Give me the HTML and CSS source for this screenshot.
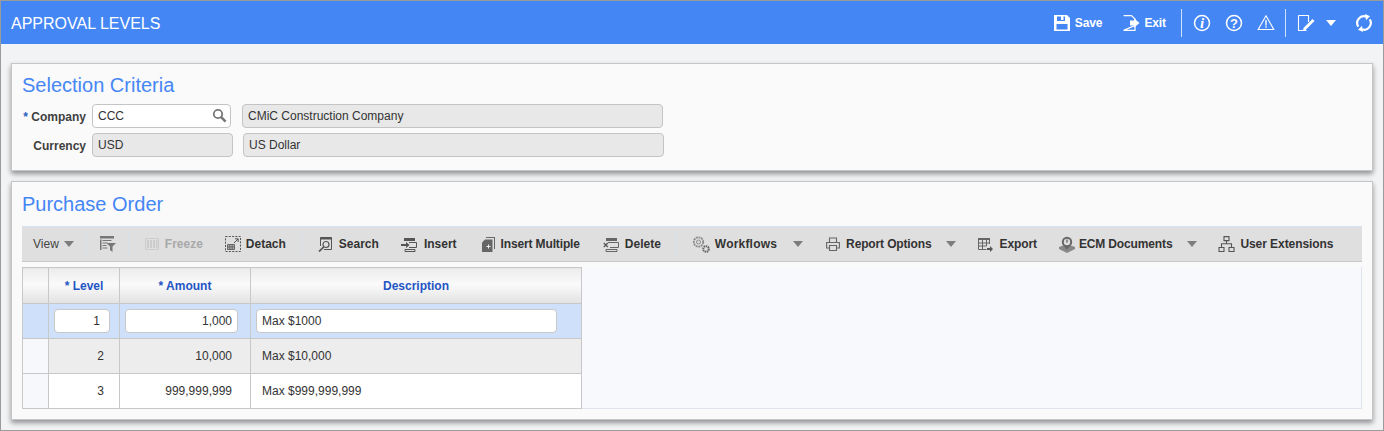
FILE: index.html
```html
<!DOCTYPE html>
<html lang="en">
<head>
<meta charset="utf-8">
<title>Approval Levels</title>
<link rel="stylesheet" href="styles.css">
</head>
<body>
<div class="frame">
  <header class="topbar">
    <div class="app-title">APPROVAL LEVELS</div>
    <div class="top-actions">
      <span class="top-btn save-btn">
        <svg class="ti" width="18" height="18" viewBox="0 0 18 18"><path fill="#fff" fill-rule="evenodd" d="M1 1h13l3 3v13H1zM4 2.500V7h8V2.500h-1.500V6H8V2.500zM3.500 10v5.500h11V10z"/></svg>
        Save</span>
      <span class="top-btn exit-btn">
        <svg class="ti" width="18" height="18" viewBox="0 0 18 18"><path fill="none" stroke="#fff" stroke-width="1.200" d="M1.600 1.600H9.500L13 5v1.500M13 11.500V16.400H1.600z"/><path fill="#fff" d="M8 6.500h4V4.300L17.500 9 12 13.700V11.500H8z"/></svg>
        Exit</span>
      <span class="top-sep sep-a"></span>
      <svg class="ti info-i" width="18" height="18" viewBox="0 0 18 18"><circle cx="9" cy="9" r="7.500" fill="none" stroke="#fff" stroke-width="1.500"/><text x="9" y="14" text-anchor="middle" class="glyph-i">i</text></svg>
      <svg class="ti help-i" width="18" height="18" viewBox="0 0 18 18"><circle cx="9" cy="9" r="7.500" fill="none" stroke="#fff" stroke-width="1.500"/><text x="9" y="13.500" text-anchor="middle" class="glyph-q">?</text></svg>
      <svg class="ti warn-i" width="18" height="18" viewBox="0 0 18 18"><path fill="none" stroke="#fff" stroke-width="1.100" d="M9 1.800 16.800 15.500H1.200z"/><path fill="#fff" d="M8.300 6h1.400v5.500H8.300zM8.300 12.300h1.400v1.500H8.300z"/></svg>
      <span class="top-sep sep-b"></span>
      <svg class="ti note-i" width="18" height="18" viewBox="0 0 18 18"><path fill="none" stroke="#fff" stroke-width="1.100" d="M1.500 1.500H11.500V8M9.500 16.500H1.500V1.500"/><path fill="#fff" d="M6.500 14 15.500 5l2 2-9 9-2.500.5z"/></svg>
      <span class="caret-white"></span>
      <svg class="ti refresh-i" width="18" height="18" viewBox="0 0 18 18"><path fill="none" stroke="#fff" stroke-width="2.200" d="M3.300 12.600A6.700 6.700 0 0 1 11 2.600M14.700 5.400A6.700 6.700 0 0 1 7 15.400"/><path fill="#fff" d="M10 0 15 2.300 11 6.200zM8 18 3 15.700 7 11.800z"/></svg>
    </div>
  </header>

  <main class="content">
    <section class="panel panel-criteria">
      <h2 class="panel-title">Selection Criteria</h2>
      <div class="form-row row-company">
        <label class="lbl"><span class="req">*</span> Company</label>
        <div class="field field-lov">CCC
          <svg class="lov-icon" width="15" height="15" viewBox="0 0 15 15"><circle cx="6" cy="6" r="4.200" fill="none" stroke="#777" stroke-width="1.800"/><path stroke="#777" stroke-width="2.600" d="M9.200 9.200 13.600 13.600"/></svg>
        </div>
        <div class="field ro field-long">CMiC Construction Company</div>
      </div>
      <div class="form-row row-currency">
        <label class="lbl">Currency</label>
        <div class="field ro field-short">USD</div>
        <div class="field ro field-long second">US Dollar</div>
      </div>
    </section>

    <section class="panel panel-po">
      <h2 class="panel-title">Purchase Order</h2>
      <div class="toolbar">
        <span class="tb view">View</span><span class="caret c-view"></span>
        <span class="tsep s1"></span>
        <svg class="ic i-filter" width="17" height="16" viewBox="0 0 17 16"><path fill="#777" d="M1 0h14v2.500H1zM1 3.500h1.500V14H1zM3.500 4h9v1h-9zM3.500 6.500h5v1h-5zM3.500 9h4v1h-4zM3.500 11.500h5v1h-5zM7.500 7h9.500L13.500 10.500V16L11 14v-3.500z"/></svg>
        <span class="tsep s2"></span>
        <svg class="ic i-freeze" width="14" height="14" viewBox="0 0 14 14"><path fill="none" stroke="#ccc" d="M.5 1.500h13v11H.5z"/><path fill="#ccc" d="M2 3h2v8H2zM5 3h2v8H5zM8 3h2v8H8zM11 3h1.500v8H11z"/></svg>
        <span class="tb off t-freeze">Freeze</span>
        <svg class="ic i-detach" width="16" height="16" viewBox="0 0 16 16"><path fill="none" stroke="#555" stroke-dasharray="2 1.300" d="M.5.500h15v15H.5z"/><path fill="none" stroke="#666" d="M2.500 8.500h7v5h-7zM2.500 10.200h7M2.500 11.900h7M4.800 8.500v5M7.200 8.500v5"/><path fill="none" stroke="#555" d="M9 7l4-4M10 2.800h3.200V6"/></svg>
        <span class="tb t-detach">Detach</span>
        <span class="tsep s3"></span>
        <svg class="ic i-search" width="15" height="16" viewBox="0 0 15 16"><path fill="none" stroke="#555" d="M2.500 10V1.500h11v12H6"/><path fill="#555" d="M2.500 1.500h11v2h-11z"/><circle cx="8" cy="8.500" r="3" fill="none" stroke="#555" stroke-width="1.200"/><path stroke="#555" stroke-width="1.700" d="M5.800 10.800 1 15.500"/></svg>
        <span class="tb t-search">Search</span>
        <svg class="ic i-insert" width="16" height="15" viewBox="0 0 16 15"><path fill="#555" d="M3 1h11v3H3zM0 7h5V5l3.500 3L5 11V9H0z"/><path fill="none" stroke="#555" d="M8 5.500h7.500v5H8M4 12.500h10v2H4z"/></svg>
        <span class="tb t-insert">Insert</span>
        <svg class="ic i-multi" width="13" height="15" viewBox="0 0 13 15"><path fill="#666" d="M4 0h9v12h-1V1H4z"/><path fill="#666" d="M3 2.500h7.500V15H0V5.500z"/><path fill="#eee" d="M4.500 9h1.500V7.500h1V9h1.500v1H7v1.500H6V10H4.500z"/></svg>
        <span class="tb t-multi">Insert Multiple</span>
        <svg class="ic i-delete" width="16" height="15" viewBox="0 0 16 15"><path fill="#666" d="M3 1h11v3H3z"/><path fill="none" stroke="#666" d="M5 5.500h10.500v5H7M3 12.500h11v2H3z"/><path stroke="#555" stroke-width="1.200" d="M.8 6l4 4M4.800 6l-4 4"/></svg>
        <span class="tb t-delete">Delete</span>
        <span class="tsep s4"></span>
        <svg class="ic i-gears" width="18" height="17" viewBox="0 0 18 17"><circle cx="6.500" cy="6" r="4.700" fill="none" stroke="#8a8a8a" stroke-width="1.800" stroke-dasharray="2 .7"/><circle cx="6.500" cy="6" r="2" fill="none" stroke="#8a8a8a"/><circle cx="14" cy="13" r="2.800" fill="none" stroke="#666" stroke-width="2" stroke-dasharray="1.500 .6"/></svg>
        <span class="tb t-work">Workflows</span><span class="caret c-work"></span>
        <svg class="ic i-print" width="14" height="14" viewBox="0 0 14 14"><path fill="none" stroke="#666" stroke-width="1.100" d="M3.500 5V1h7v4M3 11H.6V5.500h12.800V11H11M3.500 8.500h7v5h-7z"/></svg>
        <span class="tb t-report">Report Options</span><span class="caret c-report"></span>
        <svg class="ic i-export" width="15" height="15" viewBox="0 0 15 15"><path fill="#666" d="M0 1h12v2H0z"/><path fill="none" stroke="#666" d="M.5 3v9.500h8M4.500 3v9.500M8.500 3v6M.5 6h11M.5 9h8M11.500 3v4"/><path fill="#555" d="M9 11h3V9l3 3-3 3v-2H9z"/></svg>
        <span class="tb t-export">Export</span>
        <svg class="ic i-ecm" width="16" height="17" viewBox="0 0 16 17"><path fill="#888" d="M0 11l4-1.500 4 2 4-2 4 1.500v2l-8 4-8-4z"/><circle cx="8" cy="6" r="5.200" fill="#666"/><circle cx="8" cy="6" r="3.200" fill="#ddd"/><path fill="#666" d="M7.300 3.500h1.400v3h-1.400z"/><path fill="#666" d="M5 10h6l-3 3.500z"/></svg>
        <span class="tb t-ecm">ECM Documents</span><span class="caret c-ecm"></span>
        <svg class="ic i-ue" width="17" height="16" viewBox="0 0 17 16"><path fill="none" stroke="#555" stroke-width="1.100" d="M6 .6h5v4H6zM1 11.500h5v4H1zM11 11.500h5v4h-5zM8.500 4.600v3.200M3.500 11.500V7.800h10v3.700"/></svg>
        <span class="tb t-ue">User Extensions</span>
      </div>

      <div class="grid-area">
        <table class="grid">
          <colgroup>
            <col class="col-sel"><col class="col-level"><col class="col-amount"><col class="col-desc">
          </colgroup>
          <thead>
            <tr><th></th><th>* Level</th><th>* Amount</th><th>Description</th></tr>
          </thead>
          <tbody>
            <tr class="row-active">
              <td class="sel"></td>
              <td><div class="cell-input num in-level">1</div></td>
              <td><div class="cell-input num in-amount">1,000</div></td>
              <td><div class="cell-input in-desc">Max $1000</div></td>
            </tr>
            <tr class="row-alt">
              <td class="sel"></td><td class="num">2</td><td class="num">10,000</td><td class="txt">Max $10,000</td>
            </tr>
            <tr class="row-plain">
              <td class="sel"></td><td class="num">3</td><td class="num">999,999,999</td><td class="txt">Max $999,999,999</td>
            </tr>
          </tbody>
        </table>
      </div>
    </section>
  </main>
</div>
</body>
</html>
```
FILE: styles.css
```css
* { box-sizing: border-box; }
html, body { margin: 0; padding: 0; }
body {
  width: 1384px;
  height: 431px;
  overflow: hidden;
  font-family: "Liberation Sans", Arial, sans-serif;
  font-size: 12px;
  color: #333;
}
.frame {
  width: 1384px;
  height: 431px;
  border: 1px solid #9b9b9b;
  background: #f2f3f5;
}
.topbar {
  height: 43px;
  background: #4586f5;
  display: flex;
  align-items: center;
  justify-content: space-between;
  padding: 0 10px 0 10px;
}
.app-title {
  color: #fff;
  font-size: 16px;
  padding-top: 2px;
}
.top-actions { display: flex; align-items: center; height: 100%; }
.top-btn { display: flex; align-items: center; color: #fff; font-weight: bold; font-size: 12px; letter-spacing: -.1px; }
.ti { display: block; flex: none; }
.save-btn .ti { margin-right: 4px; }
.exit-btn { margin-left: 20px; }
.exit-btn .ti { margin-right: 4px; }
.top-sep { width: 1px; height: 28px; background: #cfe0fb; }
.sep-a { margin-left: 15px; margin-right: 11px; }
.info-i { margin-right: 14px; }
.help-i { margin-right: 14px; }
.warn-i { margin-right: 10px; }
.sep-b { margin-right: 11px; }
.note-i { margin-right: 11px; }
.caret-white {
  width: 0; height: 0;
  border-left: 5px solid transparent;
  border-right: 5px solid transparent;
  border-top: 6px solid #fff;
  margin-right: 19px;
}
.glyph-i { fill: #fff; font: italic bold 15px "Liberation Serif", serif; }
.glyph-q { fill: #fff; font: bold 13px "Liberation Sans", sans-serif; }

.content { padding: 19px 10px 0 10px; }
.panel {
  width: 1362px;
  background: #fafafa;
  border: 1px solid #c6c6c6;
  box-shadow: 0 3px 5px rgba(0,0,0,.4);
  padding: 0 10px;
}
.panel-criteria { height: 108px; }
.panel-po { height: 239px; margin-top: 10px; }
.panel-title {
  margin: 0;
  font-weight: normal;
  font-size: 20px;
  line-height: 24px;
  color: #4586f5;
}
.panel-criteria .panel-title { padding-top: 9px; height: 40px; }
.panel-po .panel-title { padding-top: 10px; height: 44px; }

.form-row { display: flex; align-items: center; height: 24px; }
.row-currency { margin-top: 5px; }
.lbl {
  width: 64px;
  text-align: right;
  font-weight: bold;
  color: #3f3f3f;
  padding-top: 2px;
  margin-right: 6px;
  white-space: nowrap;
}
.req { color: #2a5fc0; }
.field {
  height: 24px;
  line-height: 22px;
  border: 1px solid #c4c4c4;
  border-radius: 4px;
  padding: 0 5px;
  background: #fff;
  color: #333;
  position: relative;
}
.field.ro { background: #e8e8e8; }
.field-lov { width: 139px; }
.lov-icon { position: absolute; right: 3px; top: 3px; }
.field-long { width: 421px; margin-left: 11px; }
.field-long.second { margin-left: 10px; }
.field-short { width: 141px; }

.toolbar {
  height: 36px;
  background: #dfdfdf;
  border-top: 1px solid #d3e1f7;
  border-bottom: 1px solid #c8c8c8;
  display: flex;
  align-items: center;
  white-space: nowrap;
}
.tb { font-weight: bold; color: #333; line-height: 16px; flex: none; }
.tb.off { color: #a9a9a9; }
.tb.view { font-weight: normal; color: #444; margin-left: 11px; }
.ic { display: block; flex: none; }
.tsep { width: 1px; height: 28px; background: #d8dfe9; flex: none; }
.caret {
  width: 0; height: 0; flex: none;
  border-left: 5px solid transparent;
  border-right: 5px solid transparent;
  border-top: 6px solid #7d7d7d;
}
.c-view { margin-left: 5px; }
.s1 { margin-left: 12px; }
.i-filter { margin-left: 12px; }
.s2 { margin-left: 12px; }
.i-freeze { margin-left: 16px; }
.t-freeze { margin-left: 6px; }
.i-detach { margin-left: 22px; }
.t-detach { margin-left: 5px; }
.s3 { margin-left: 15px; }
.i-search { margin-left: 16px; }
.t-search { margin-left: 6px; }
.i-insert { margin-left: 22px; }
.t-insert { margin-left: 7px; }
.i-multi { margin-left: 25px; }
.t-multi { margin-left: 6px; letter-spacing: -.14px; }
.i-delete { margin-left: 23px; }
.t-delete { margin-left: 6px; }
.s4 { margin-left: 15px; }
.i-gears { margin-left: 15px; }
.t-work { margin-left: 5px; letter-spacing: .2px; }
.c-work { margin-left: 16px; }
.i-print { margin-left: 23px; }
.t-report { margin-left: 6px; letter-spacing: -.14px; }
.c-report { margin-left: 15px; }
.i-export { margin-left: 22px; }
.t-export { margin-left: 6px; letter-spacing: -.1px; }
.i-ecm { margin-left: 22px; }
.t-ecm { margin-left: 4px; letter-spacing: -.14px; }
.c-ecm { margin-left: 15px; }
.i-ue { margin-left: 21px; }
.t-ue { margin-left: 5px; letter-spacing: -.07px; }

.grid-area {
  height: 142px;
  margin-top: 5px;
  background: #f8f9fd;
  border-right: 1px solid #dfe4ec;
  border-bottom: 1px solid #dfe4ec;
}
.grid {
  border-collapse: collapse;
  table-layout: fixed;
  width: 559px;
}
.col-sel { width: 26px; }
.col-level { width: 71px; }
.col-amount { width: 131px; }
.col-desc { width: 331px; }
.grid th, .grid td { border: 1px solid #c8c8c8; padding: 0; }
.grid th {
  height: 36px;
  font-size: 12px;
  font-weight: bold;
  color: #1f55c4;
  background: linear-gradient(#ececec, #fafafa 45%, #e2e2e2);
  text-align: center;
}
.grid td { height: 35px; color: #333; }
.grid td.num { text-align: right; padding-right: 18px; }
.grid td.txt { padding-left: 11px; }
.grid tr td:nth-child(2).num { padding-right: 15px; }
.row-active td { background: #cfe0fb; }
.row-alt td { background: #ededed; }
.row-plain td { background: #fff; }
.grid td.sel { background: #f6f8fc; }
.row-active td.sel { background: #cfe0fb; }
.cell-input {
  height: 24px;
  line-height: 22px;
  background: #fff;
  border: 1px solid #c8c8c8;
  border-radius: 4px;
  padding: 0 5px;
}
.cell-input.num { text-align: right; }
.in-level { width: 56px; margin-left: 5px; padding-right: 9px; }
.in-amount { width: 113px; margin-left: 5px; }
.in-desc { width: 301px; margin-left: 5px; }
```
